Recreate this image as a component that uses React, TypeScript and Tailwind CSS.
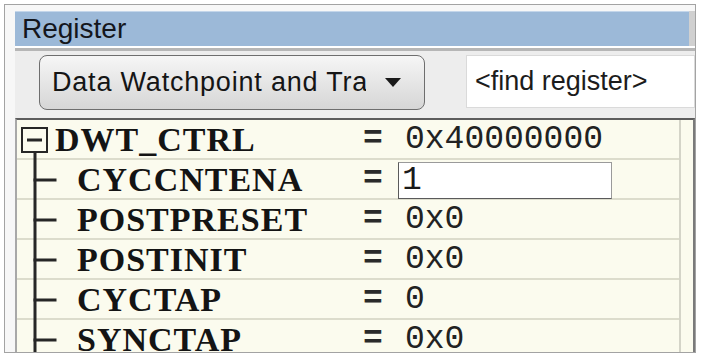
import React from "react";

const sans = { fontFamily: '"Liberation Sans", Arial, sans-serif' };
const mono = { fontFamily: '"Liberation Mono", "Courier New", monospace' };
const serif = { fontFamily: '"Liberation Serif", "Times New Roman", serif' };

type Row = { name: string; value: string; edit?: boolean };

const rows: Row[] = [
  { name: "CYCCNTENA", value: "1", edit: true },
  { name: "POSTPRESET", value: "0x0" },
  { name: "POSTINIT", value: "0x0" },
  { name: "CYCTAP", value: "0" },
  { name: "SYNCTAP", value: "0x0" },
];

function RowShell({
  gutter,
  name,
  value,
}: {
  gutter: React.ReactNode;
  name: string;
  value: React.ReactNode;
}) {
  return (
    <div className="flex h-[40px] shrink-0">
      <div className="flex h-full w-[662px] items-center shadow-[inset_0_-2px_0_#dcdccc]">
        <div className="flex h-full w-[346px] items-center">
          {gutter}
          <span
            className="text-[34px] font-bold leading-[40px] tracking-[1px] text-[#141414]"
            style={serif}
          >
            {name}
          </span>
        </div>
        <div
          className="w-[35px] text-[33px] font-bold leading-[40px] text-[#2a2a2a]"
          style={mono}
        >
          =
        </div>
        <div className="flex h-full flex-1 items-center">{value}</div>
      </div>
      <div className="h-full w-[2px] bg-[#d4d4c8]" />
      <div className="h-full flex-1" />
    </div>
  );
}

function Value({ v }: { v: string }) {
  return (
    <span
      className="pl-[7px] text-[33px] leading-[40px] text-[#222]"
      style={mono}
    >
      {v}
    </span>
  );
}

export default function App() {
  return (
    <div className="h-[357px] w-[702px] overflow-hidden bg-white">
      <div className="ml-[4px] mt-[4px] flex h-[349px] w-[692px] flex-col border border-[#a3a3a3] bg-[#f7f7f7] pl-[10px] pt-[6px]">
        {/* Title bar */}
        <div className="flex">
          <div className="flex h-[35px] flex-1 items-center bg-[#9cb9d8] pl-[7px] shadow-[inset_0_1px_0_#c4d6ea]">
            <span className="text-[28px] leading-none text-[#14161c]" style={sans}>
              Register
            </span>
          </div>
          <div className="w-[6px] bg-[#d0d0d0]" />
        </div>
        <div className="h-[2px] bg-white" />
        <div className="h-[3px] bg-[#b6b6b6]" />
        {/* Toolbar */}
        <div className="flex h-[67px] shrink-0 items-start bg-[#ededed] pt-[2px]">
          <div className="ml-[24px] mt-[2px] flex h-[55px] w-[386px] items-center rounded-[8px] border-[1.5px] border-[#6e6e6e] bg-gradient-to-b from-[#f6f6f6] to-[#d6d6d6] pl-[12px]">
            <span
              className="block w-[314px] overflow-hidden whitespace-nowrap text-[27px] leading-none tracking-[0.8px] text-[#151515]"
              style={sans}
            >
              Data Watchpoint and Trace
            </span>
            <svg width="16" height="10" viewBox="0 0 16 10" className="ml-[19px]">
              <polygon points="0,0 16,0 8,9" fill="#1a1a1a" />
            </svg>
          </div>
          <div className="ml-[41px] mt-[2px] flex h-[53px] flex-1 items-center border border-[#dadada] bg-white pl-[8px]">
            <span className="text-[27px] leading-none text-[#1c1c1c]" style={sans}>
              &lt;find register&gt;
            </span>
          </div>
        </div>
        {/* Table */}
        <div className="flex min-h-0 flex-1 flex-col overflow-hidden border-l-2 border-r-2 border-t-2 border-l-[#a8a8a8] border-r-[#7a7a7a] border-t-[#5c5c5c] bg-[#fbfbee]">
          <RowShell
            name="DWT_CTRL"
            gutter={
              <svg width="38" height="40" className="shrink-0">
                <rect x="5" y="8" width="25" height="24" fill="#fbfbee" stroke="#262626" strokeWidth="2" />
                <rect x="10" y="18.5" width="15" height="3" fill="#262626" />
                <rect x="16.5" y="33" width="3" height="7" fill="#262626" />
              </svg>
            }
            value={<Value v="0x40000000" />}
          />
          {rows.map((r) => (
            <RowShell
              key={r.name}
              name={r.name}
              gutter={
                <svg width="60" height="40" className="shrink-0">
                  <rect x="16.5" y="0" width="3" height="40" fill="#262626" />
                  <rect x="16.5" y="18.5" width="23" height="3" fill="#262626" />
                </svg>
              }
              value={
                r.edit ? (
                  <div className="flex h-[37px] w-[214px] items-center border border-[#9a9a9a] border-b-[#5a5a5a] border-l-[#5a5a5a] bg-white pl-[3px]">
                    <span className="text-[33px] leading-none text-[#1a1a1a]" style={mono}>
                      {r.value}
                    </span>
                  </div>
                ) : (
                  <Value v={r.value} />
                )
              }
            />
          ))}
        </div>
      </div>
    </div>
  );
}
